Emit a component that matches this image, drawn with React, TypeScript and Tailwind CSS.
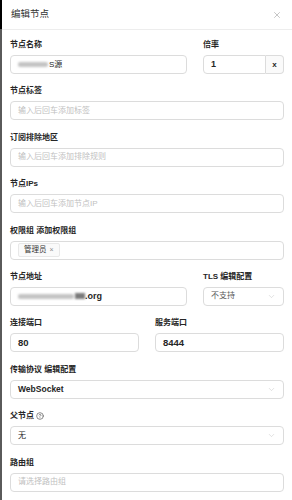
import { X, ChevronDown, CircleHelp } from 'lucide-react'
import type { ReactNode } from 'react'

const font = { fontFamily: '"Liberation Sans", "Noto Sans CJK SC", sans-serif' }

function Label({ children }: { children: ReactNode }) {
  return (
    <div className="mb-[4px] flex h-[12px] items-center gap-[2px] text-[8px] font-bold leading-[12px] text-[#262626]">
      {children}
    </div>
  )
}

function Box({ children, className = '' }: { children?: ReactNode; className?: string }) {
  return (
    <div className={`flex h-[19px] items-center rounded-[4px] border border-[#dcdcdc] bg-white px-[7px] text-[8px] ${className}`}>
      {children}
    </div>
  )
}

function Placeholder({ text }: { text: string }) {
  return <Box><span className="text-[#bfbfbf]">{text}</span></Box>
}

function Select({ value, bold = false, muted = false }: { value: string; bold?: boolean; muted?: boolean }) {
  return (
    <Box className="justify-between">
      <span className={`${bold ? 'text-[8.5px] font-bold text-[#262626]' : muted ? 'text-[#595959]' : 'text-[#262626]'}`}>{value}</span>
      <ChevronDown size={9} strokeWidth={1.2} className="text-[#bfbfbf]" />
    </Box>
  )
}

function Blurred({ width }: { width: number }) {
  return (
    <span
      className="inline-block h-[5px] rounded-[2px] bg-[#c4c4c4] blur-[1.2px]"
      style={{ width }}
    />
  )
}

export default function App() {
  return (
    <div className="flex h-[500px] w-[292px] bg-white" style={font}>
      {/* backdrop edge */}
      <div className="flex w-[2px] shrink-0 flex-col">
        <div className="h-[29px] bg-black" />
        <div className="flex-1 bg-[#5a5a5a]" />
      </div>

      <div className="flex min-w-0 flex-1 flex-col">
        {/* Header */}
        <div className="flex h-[30px] shrink-0 items-center justify-between border-b border-[#ededed] pl-[9px] pr-[10px]">
          <span className="text-[9.5px] text-[#333]">编辑节点</span>
          <X size={10} strokeWidth={1.2} className="text-[#8c8c8c]" />
        </div>

        {/* Body */}
        <div className="flex flex-col gap-[11.4px] pl-[8px] pr-[8px] pt-[9px]">
          <div className="flex gap-[16px]">
            <div className="w-[177px]">
              <Label>节点名称</Label>
              <Box>
                <Blurred width={30} />
                <span className="ml-[1px] text-[#262626]">S源</span>
              </Box>
            </div>
            <div className="flex-1">
              <Label>倍率</Label>
              <div className="flex h-[19px]">
                <div className="flex flex-1 items-center rounded-l-[4px] border border-[#dcdcdc] px-[7px] text-[9px] font-bold text-[#262626]">1</div>
                <div className="flex w-[18px] items-center justify-center rounded-r-[4px] border border-l-0 border-[#dcdcdc] bg-[#fafafa] text-[8px] font-bold text-[#262626]">x</div>
              </div>
            </div>
          </div>

          <div>
            <Label>节点标签</Label>
            <Placeholder text="输入后回车添加标签" />
          </div>

          <div>
            <Label>订阅排除地区</Label>
            <Placeholder text="输入后回车添加排除规则" />
          </div>

          <div>
            <Label>节点IPs</Label>
            <Placeholder text="输入后回车添加节点IP" />
          </div>

          <div>
            <Label>权限组 添加权限组</Label>
            <Box className="px-[3px]">
              <span className="flex h-[14px] items-center gap-[3px] rounded-[2px] border border-[#e8e8e8] bg-[#fafafa] px-[5px] text-[7.5px] text-[#333]">
                管理员
                <span className="text-[7px] text-[#8c8c8c]">×</span>
              </span>
            </Box>
          </div>

          <div className="flex gap-[16px]">
            <div className="w-[177px]">
              <Label>节点地址</Label>
              <Box>
                <Blurred width={56} />
                <span className="ml-[1px] inline-block h-[6px] w-[10px] bg-[#7a7a7a] blur-[1px]" />
                <span className="text-[9px] font-bold text-[#262626]">.org</span>
              </Box>
            </div>
            <div className="flex-1">
              <Label>TLS 编辑配置</Label>
              <Select value="不支持" muted />
            </div>
          </div>

          <div className="flex gap-[16px]">
            <div className="flex-1">
              <Label>连接端口</Label>
              <Box><span className="text-[9.5px] font-bold text-[#262626]">80</span></Box>
            </div>
            <div className="flex-1">
              <Label>服务端口</Label>
              <Box><span className="text-[9.5px] font-bold text-[#262626]">8444</span></Box>
            </div>
          </div>

          <div>
            <Label>传输协议 编辑配置</Label>
            <Select value="WebSocket" bold />
          </div>

          <div>
            <Label>
              父节点
              <CircleHelp size={8} strokeWidth={2} className="text-[#555]" />
            </Label>
            <Select value="无" />
          </div>

          <div>
            <Label>路由组</Label>
            <Placeholder text="请选择路由组" />
          </div>
        </div>
      </div>
    </div>
  )
}
